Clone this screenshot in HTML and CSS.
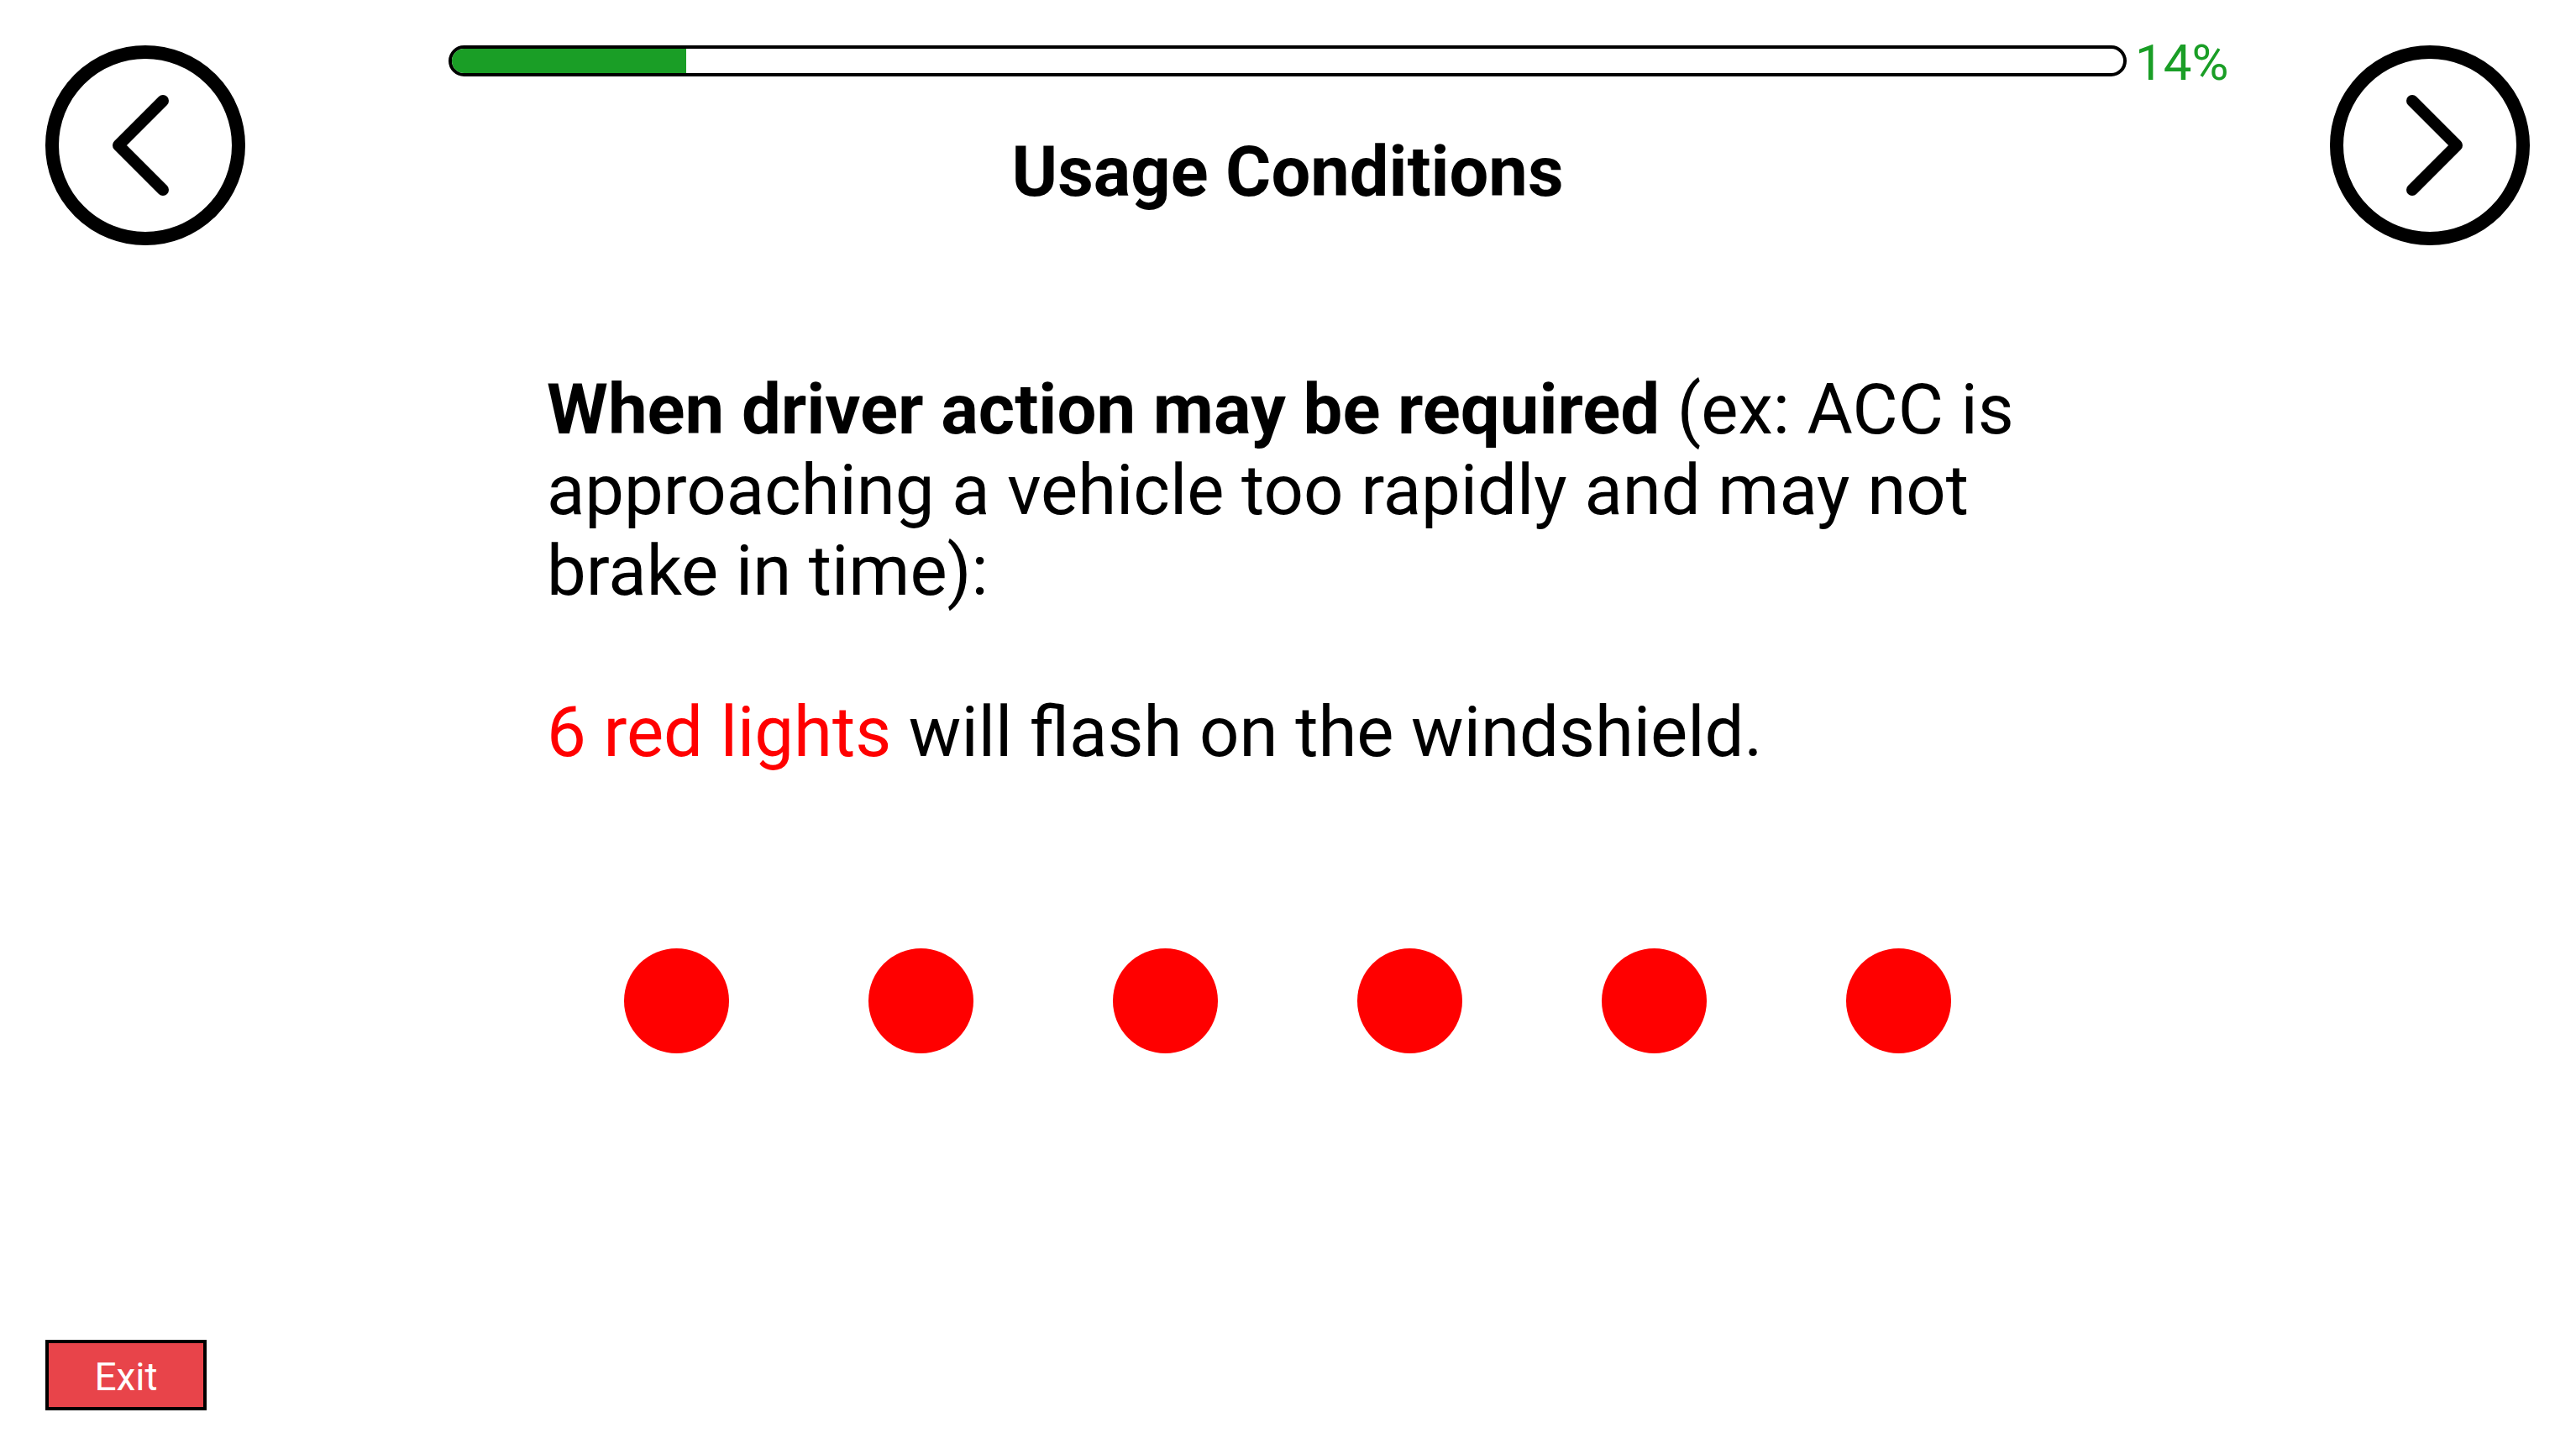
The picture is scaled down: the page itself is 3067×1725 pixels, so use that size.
FILE: index.html
```html
<!DOCTYPE html>
<html lang="en">
<head>
<meta charset="utf-8">
<title>Usage Conditions</title>
<link rel="stylesheet" href="styles.css">
</head>
<body>
<div class="page">
  <header class="top">
    <button class="nav-btn" aria-label="Previous">
      <svg viewBox="0 0 238 238" width="238" height="238">
        <circle cx="119" cy="119" r="111" fill="none" stroke="#000" stroke-width="16"/>
        <polyline points="140,66 87,119 140,172" fill="none" stroke="#000" stroke-width="14" stroke-linecap="round" stroke-linejoin="round"/>
      </svg>
    </button>
    <div class="center">
      <div class="track">
        <div class="bar"><div class="fill" style="width:14%"></div></div>
        <span class="percent">14%</span>
      </div>
      <h1 class="title">Usage Conditions</h1>
    </div>
    <button class="nav-btn" aria-label="Next">
      <svg viewBox="0 0 238 238" width="238" height="238">
        <circle cx="119" cy="119" r="111" fill="none" stroke="#000" stroke-width="16"/>
        <polyline points="98,66 151,119 98,172" fill="none" stroke="#000" stroke-width="14" stroke-linecap="round" stroke-linejoin="round"/>
      </svg>
    </button>
  </header>

  <main class="content">
    <p class="para"><strong>When driver action may be required</strong> (ex: ACC is approaching a vehicle too rapidly and may not brake in time):</p>
    <p class="para para-second"><span class="red">6 red lights</span> will flash on the windshield.</p>
  </main>

  <div class="dots">
    <span class="dot"></span>
    <span class="dot"></span>
    <span class="dot"></span>
    <span class="dot"></span>
    <span class="dot"></span>
    <span class="dot"></span>
  </div>

  <button class="exit">Exit</button>
</div>
</body>
</html>
```

FILE: styles.css
```css
html, body {
  margin: 0;
  padding: 0;
  background: #fff;
}

body {
  font-family: Roboto, "Liberation Sans", Arial, sans-serif;
  color: #000;
}

.page {
  box-sizing: border-box;
  min-height: 100vh;
  display: flex;
  flex-direction: column;
  padding: 54px 55px 46px 54px;
}

.top {
  display: grid;
  grid-template-columns: 238px 1fr 238px;
  align-items: start;
}

.nav-btn {
  width: 238px;
  height: 238px;
  padding: 0;
  margin: 0;
  border: 0;
  background: none;
  display: block;
}

.nav-btn svg {
  display: block;
}

.center {
  display: flex;
  flex-direction: column;
  align-items: center;
}

.track {
  position: relative;
  width: 1998px;
  height: 37px;
}

.bar {
  box-sizing: border-box;
  width: 100%;
  height: 37px;
  border: 4px solid #000;
  border-radius: 19px;
  overflow: hidden;
  background: #fff;
}

.fill {
  height: 100%;
  background: #1a9e26;
}

.percent {
  position: absolute;
  left: calc(100% + 10px);
  top: -15px;
  font-size: 60px;
  line-height: normal;
  color: #1a9e26;
  white-space: nowrap;
}

.title {
  margin: 65px 0 0;
  font-size: 83px;
  font-weight: 700;
  line-height: normal;
}

.content {
  width: 1764px;
  margin: 148px auto 0;
}

.para {
  margin: 0;
  font-size: 83.3px;
  line-height: 96px;
}

.para strong {
  font-weight: 700;
}

.para-second {
  margin-top: 96px;
}

.red {
  color: #ff0000;
}

.dots {
  display: flex;
  justify-content: center;
  gap: 166px;
  margin-top: 209px;
}

.dot {
  width: 125px;
  height: 125px;
  border-radius: 50%;
  background: #ff0000;
}

.exit {
  margin-top: auto;
  align-self: flex-start;
  box-sizing: border-box;
  width: 192px;
  height: 84px;
  padding: 4px 0 0;
  border: 4px solid #000;
  background: #e8444a;
  color: #fff;
  font-family: Roboto, "Liberation Sans", Arial, sans-serif;
  font-size: 46px;
  line-height: normal;
  display: flex;
  align-items: center;
  justify-content: center;
}
```
